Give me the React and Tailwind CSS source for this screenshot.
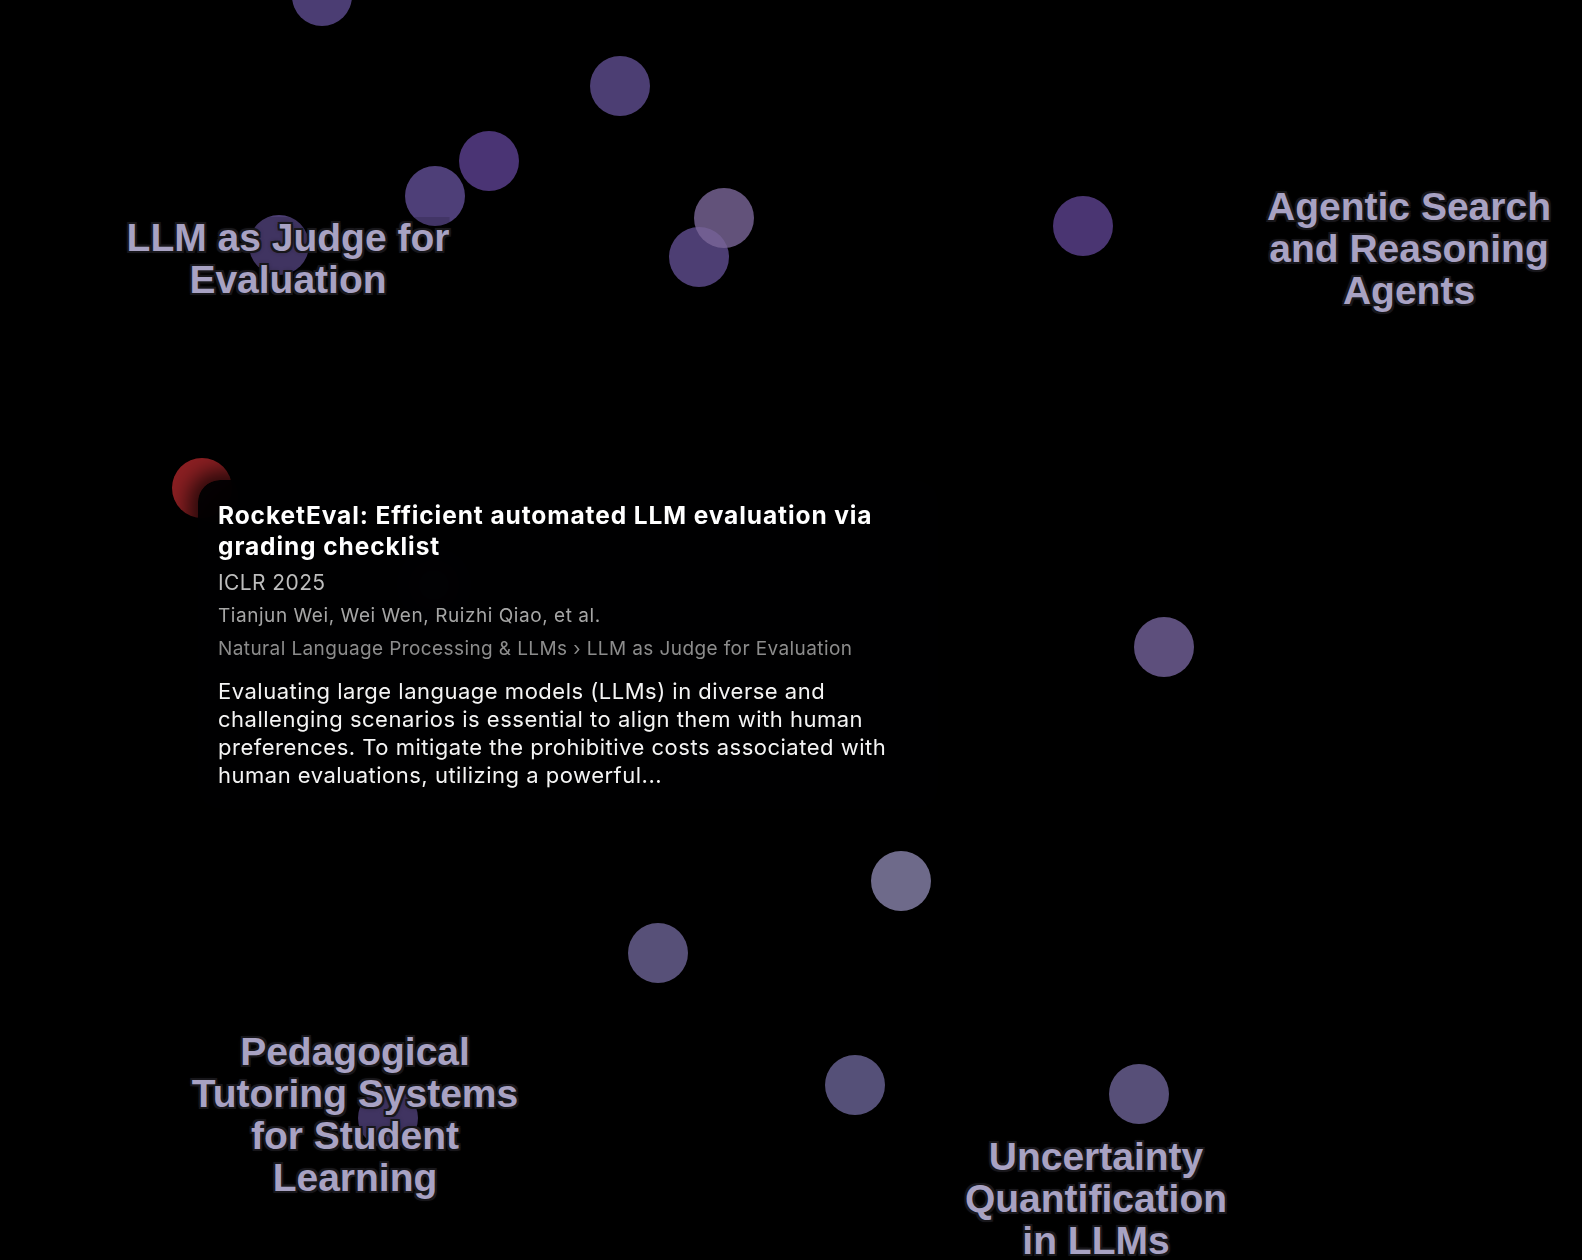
import React from "react";

const dots = [
  { x: 322, y: -4, fill: "#4b3d73" },
  { x: 620, y: 86, fill: "#4c3e73" },
  { x: 489, y: 161, fill: "#4a3474" },
  { x: 435, y: 196, fill: "#4e3f78" },
  { x: 279, y: 245, fill: "#4c3e73" },
  { x: 699, y: 257, fill: "#4d3e73" },
  { x: 724, y: 218, fill: "rgba(123,103,153,0.8)" },
  { x: 1083, y: 226, fill: "#4a3572" },
  { x: 434, y: 585, fill: "#3c2f5e" },
  { x: 202, y: 488, fill: "#8a1f22" },
  { x: 1164, y: 647, fill: "#5d4f7c" },
  { x: 901, y: 881, fill: "#6e6a8a" },
  { x: 658, y: 953, fill: "#575078" },
  { x: 855, y: 1085, fill: "#555078" },
  { x: 1139, y: 1094, fill: "#574f78" },
  { x: 388, y: 1118, fill: "#4c3e73" },
];

const labels = [
  { x: 288, y: 217, lines: ["LLM as Judge for", "Evaluation"] },
  { x: 1409, y: 186, lines: ["Agentic Search", "and Reasoning", "Agents"] },
  { x: 355, y: 1031, lines: ["Pedagogical", "Tutoring Systems", "for Student", "Learning"] },
  { x: 1096, y: 1136, lines: ["Uncertainty", "Quantification", "in LLMs"] },
];

function ClusterLabel({ label }) {
  return (
    <div
      className="absolute -translate-x-1/2 bg-black/15 text-center whitespace-nowrap font-['Liberation_Sans',Arial,sans-serif] text-[39px] font-bold leading-[42px] text-[#a8a2c3] [text-shadow:2px_0_0_#18171b,-2px_0_0_#18171b,0_2px_0_#18171b,0_-2px_0_#18171b,2px_2px_0_#18171b,-2px_-2px_0_#18171b,2px_-2px_0_#18171b,-2px_2px_0_#18171b,0_0_5px_#18171b]"
      style={{ left: label.x, top: label.y }}
    >
      {label.lines.map((l) => (
        <div key={l}>{l}</div>
      ))}
    </div>
  );
}

export default function App() {
  return (
    <main className="relative h-[1260px] w-[1582px] overflow-hidden bg-black">
      <svg className="absolute inset-0" width="1582" height="1260">
        {dots.map((d, i) => (
          <circle key={i} cx={d.x} cy={d.y} r="30" fill={d.fill} />
        ))}
      </svg>

      {labels.map((l) => (
        <ClusterLabel key={l.lines[0]} label={l} />
      ))}

      <div className="absolute left-[198px] top-[480px] w-[740px] rounded-[22px] bg-[rgba(0,0,1,0.96)] px-5 pt-5 pb-5 backdrop-blur-xl shadow-[0_0_20px_10px_rgba(0,0,0,0.7)] font-['Inter',sans-serif]">
        <h2 className="text-[24.5px] font-bold leading-[31px] tracking-[0.9px] text-white">
          RocketEval: Efficient automated LLM evaluation via
          <br />
          grading checklist
        </h2>
        <div className="mt-2 text-[21px] leading-[26px] tracking-[0.4px] text-[#bdbdbd]">ICLR 2025</div>
        <div className="mt-2 text-[19px] leading-[24px] tracking-[0.55px] text-[#a6a6a6]">
          Tianjun Wei, Wei Wen, Ruizhi Qiao, et al.
        </div>
        <div className="mt-[9px] text-[19px] leading-[24px] tracking-[0.4px] text-[#8c8c8c]">
          Natural Language Processing &amp; LLMs › LLM as Judge for Evaluation
        </div>
        <p className="mt-4 text-[22px] leading-[28px] tracking-[0.5px] text-[#f4f4f4]">
          Evaluating large language models (LLMs) in diverse and
          <br />
          challenging scenarios is essential to align them with human
          <br />
          preferences. To mitigate the prohibitive costs associated with
          <br />
          human evaluations, utilizing a powerful...
        </p>
      </div>
    </main>
  );
}
